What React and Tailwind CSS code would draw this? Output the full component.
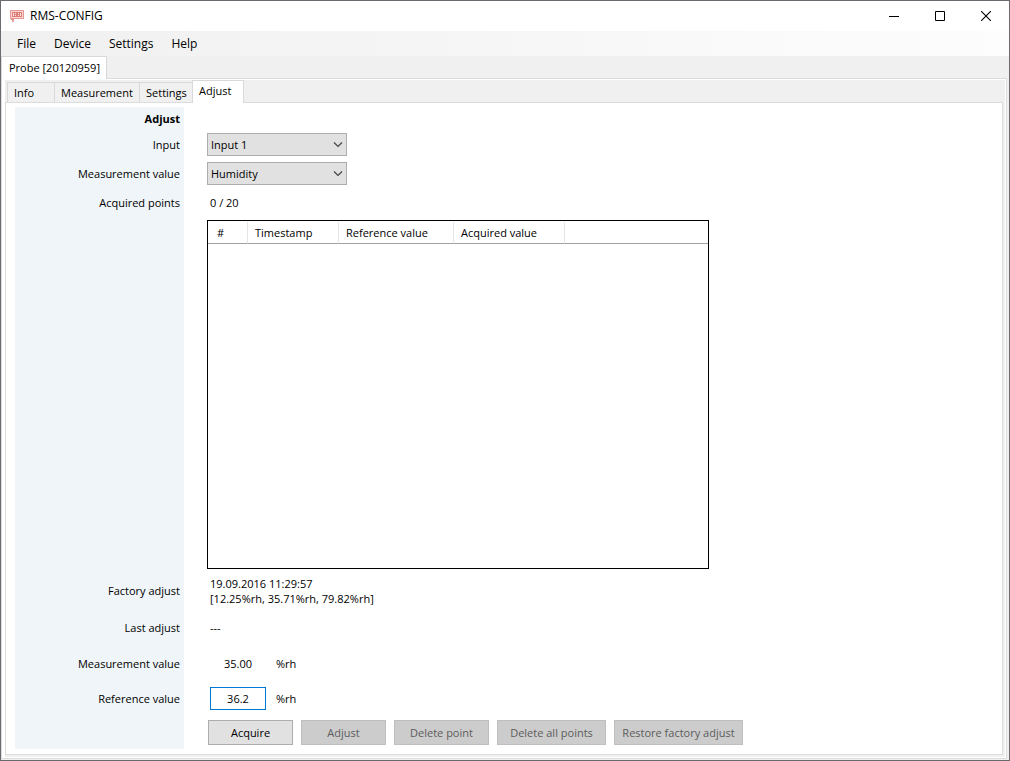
import React, { useState } from 'react';

const MENU_ITEMS = ['File', 'Device', 'Settings', 'Help'];

const TABS = [
    { name: 'Info', className: 'w-[47px]' },
    { name: 'Measurement', className: 'w-[85px]' },
    { name: 'Settings', className: 'w-[53px]' },
    { name: 'Adjust', className: 'w-[52px]' },
];

const ACTIONS = [
    { label: 'Acquire', className: 'w-[85px]', disabled: false },
    { label: 'Adjust', className: 'w-[85px]', disabled: true },
    { label: 'Delete point', className: 'w-[95px]', disabled: true },
    { label: 'Delete all points', className: 'w-[109px]', disabled: true },
    { label: 'Restore factory adjust', className: 'w-[129px]', disabled: true },
];

const AppIcon = () => (
    <svg width="14" height="13" viewBox="0 0 14 13" fill="none" shapeRendering="crispEdges" aria-hidden="true">
        <path d="M0 0h14v9H0z" fill="#e89a97" />
        <path d="M1 1h12v7H1z" fill="#f7d3d1" />
        <path d="M2 2h10v5H2z" fill="#e07c78" />
        <path d="M3 3h1v3H3zM5 3h1v1H5zM5 5h1v1H5zM8 3h1v1H8zM8 5h1v1H8zM10 3h1v3h-1z" fill="#fbe9e8" />
        <path d="M1 9h3v1H1z" fill="#e58784" />
        <path d="M2 10h2v2H2z" fill="#e9a19e" />
    </svg>
);

const ChevronIcon = () => (
    <svg className="pointer-events-none absolute top-2 right-1" width="10" height="7" viewBox="0 0 10 7" fill="none" stroke="#444" strokeWidth="1.2" aria-hidden="true">
        <path d="M1 1.5l4 4 4-4" />
    </svg>
);

const TitleBar = () => (
    <header className="flex h-[30px] items-center justify-between bg-white pl-[9px]">
        <div className="flex items-center gap-[6px]">
            <AppIcon />
            <h1 className="text-[12px]">RMS-CONFIG</h1>
        </div>
        <div className="flex">
            <button type="button" aria-label="Minimize" className="flex h-7 w-[46px] items-center justify-center">
                <svg width="10" height="10" viewBox="0 0 10 10" shapeRendering="crispEdges"><path d="M0 5h10v1H0z" /></svg>
            </button>
            <button type="button" aria-label="Maximize" className="flex h-7 w-[46px] items-center justify-center">
                <svg width="10" height="10" viewBox="0 0 10 10" fill="none" stroke="#000"><path d="M.5.5h9v9h-9z" /></svg>
            </button>
            <button type="button" aria-label="Close" className="flex h-7 w-[46px] items-center justify-center">
                <svg width="10" height="10" viewBox="0 0 10 10" fill="none" stroke="#000" strokeWidth="1.1"><path d="M0 0l10 10M10 0L0 10" /></svg>
            </button>
        </div>
    </header>
);

const Row = ({ label, htmlFor, className, bold = false, children }) => (
    <div className={`flex ${className}`}>
        <div className="flex w-[169px] shrink-0 items-center justify-end bg-[#eff5f8] pr-1">
            {htmlFor ? <label htmlFor={htmlFor}>{label}</label> : <span className={bold ? 'font-bold' : ''}>{label}</span>}
        </div>
        <div className="flex flex-1 items-center pl-[23px]">{children}</div>
    </div>
);

const Select = ({ id, options }) => (
    <div className="relative w-[140px]">
        <select id={id} className="block h-[23px] w-full appearance-none border border-[#adadad] bg-[#e1e1e1] pl-[3px] outline-none">
            {options.map((option) => <option key={option}>{option}</option>)}
        </select>
        <ChevronIcon />
    </div>
);

const PointsTable = () => (
    <div className="w-[502px] self-stretch border border-black pt-px">
        <table className="w-full table-fixed border-separate border-spacing-0 text-left">
            <thead>
                <tr className="h-[22px]">
                    <th className="w-10 border-r border-b border-r-[#e5e5e5] border-b-[#a0a0a0] pl-[9px] font-normal">#</th>
                    <th className="w-[91px] border-r border-b border-r-[#e5e5e5] border-b-[#a0a0a0] pl-[7px] font-normal">Timestamp</th>
                    <th className="w-[115px] border-r border-b border-r-[#e5e5e5] border-b-[#a0a0a0] pl-[7px] font-normal">Reference value</th>
                    <th className="w-[111px] border-r border-b border-r-[#e5e5e5] border-b-[#a0a0a0] pl-[7px] font-normal">Acquired value</th>
                    <td className="border-b border-b-[#a0a0a0]"></td>
                </tr>
            </thead>
            <tbody></tbody>
        </table>
    </div>
);

const AdjustForm = () => {
    const [reference, setReference] = useState('36.2');

    return (
        <form className="flex flex-1 flex-col" onSubmit={(e) => e.preventDefault()}>
            <Row label="Adjust" bold className="h-[23px]" />
            <Row label="Input" htmlFor="input" className="h-[29px]">
                <Select id="input" options={['Input 1', 'Input 2']} />
            </Row>
            <Row label="Measurement value" htmlFor="quantity" className="h-[29px]">
                <Select id="quantity" options={['Humidity', 'Temperature']} />
            </Row>
            <Row label="Acquired points" className="h-[29px]">
                <span className="pl-[3px]">0 / 20</span>
            </Row>
            <Row label="" className="min-h-[200px] flex-1">
                <div className="flex self-stretch py-[3px]"><PointsTable /></div>
            </Row>
            <Row label="Factory adjust" className="h-[38px]">
                <p className="pl-[3px] leading-[15px]">19.09.2016 11:29:57<br />[12.25%rh, 35.71%rh, 79.82%rh]</p>
            </Row>
            <Row label="Last adjust" className="h-9">
                <span className="pl-[3px]">---</span>
            </Row>
            <Row label="Measurement value" className="h-[35px]">
                <div className="flex items-center gap-[10px] pl-[3px]">
                    <span className="w-14 text-center">35.00</span>
                    <span>%rh</span>
                </div>
            </Row>
            <Row label="Reference value" htmlFor="reference" className="h-[35px]">
                <div className="flex items-center gap-[10px] pl-[3px]">
                    <input id="reference" value={reference} onChange={(e) => setReference(e.target.value)} className="h-[23px] w-14 border border-[#0078d7] bg-white pb-px text-center outline-none" />
                    <span>%rh</span>
                </div>
            </Row>
            <Row label="" className="h-[33px]">
                <div className="flex gap-2 pl-px">
                    {ACTIONS.map((action) => (
                        <button key={action.label} type="button" disabled={action.disabled} className={`h-[25px] whitespace-nowrap border ${action.className} ${action.disabled ? 'border-[#bfbfbf] bg-[#cccccc] text-[#5c5c5c]' : 'border-[#adadad] bg-[#e1e1e1]'}`}>
                            {action.label}
                        </button>
                    ))}
                </div>
            </Row>
        </form>
    );
};

const App = () => {
    const [activeTab, setActiveTab] = useState('Adjust');

    return (
        <div className="flex min-h-screen flex-col border border-[#6a6a70] bg-[#f0f0f0] font-['Open_Sans','Noto_Sans',sans-serif] text-[11px] leading-4 text-black">
            <TitleBar />
            <nav className="flex h-[25px] items-center gap-[18px] bg-linear-to-r from-[#f0f0f0] to-[#fdfdfd] pl-4 text-[12px]">
                {MENU_ITEMS.map((item) => <button key={item} type="button">{item}</button>)}
            </nav>
            <div className="flex" role="tablist">
                <button type="button" role="tab" aria-selected="true" className="z-10 -mb-px h-[23px] w-[106px] whitespace-nowrap border border-b-0 border-[#d9d9d9] bg-white pl-[7px] text-left">Probe [20120959]</button>
            </div>
            <main className="mr-[2px] mb-px flex flex-1 flex-col border border-[#dcdcdc] bg-white pt-px pr-px pb-px pl-[3px]">
                <div className="flex flex-1 flex-col bg-[#f0f0f0] pr-[2px] pb-[2px]">
                    <div className="flex items-end pl-[2px]" role="tablist">
                        {TABS.map((tab) => (
                            <button
                                key={tab.name}
                                type="button"
                                role="tab"
                                aria-selected={activeTab === tab.name}
                                onClick={() => setActiveTab(tab.name)}
                                className={`flex items-center whitespace-nowrap border border-b-0 border-[#d9d9d9] pl-[6px] ${tab.className} ${activeTab === tab.name ? 'z-10 -mb-px h-[23px] bg-white pb-[2px]' : 'h-5 border-r-0 bg-[#f0f0f0]'}`}
                            >
                                {tab.name}
                            </button>
                        ))}
                    </div>
                    <div className="flex flex-1 flex-col border border-[#dcdcdc] bg-white pt-1 pb-[5px] pl-[9px]">
                        <AdjustForm />
                    </div>
                </div>
            </main>
        </div>
    );
};

export default App;
